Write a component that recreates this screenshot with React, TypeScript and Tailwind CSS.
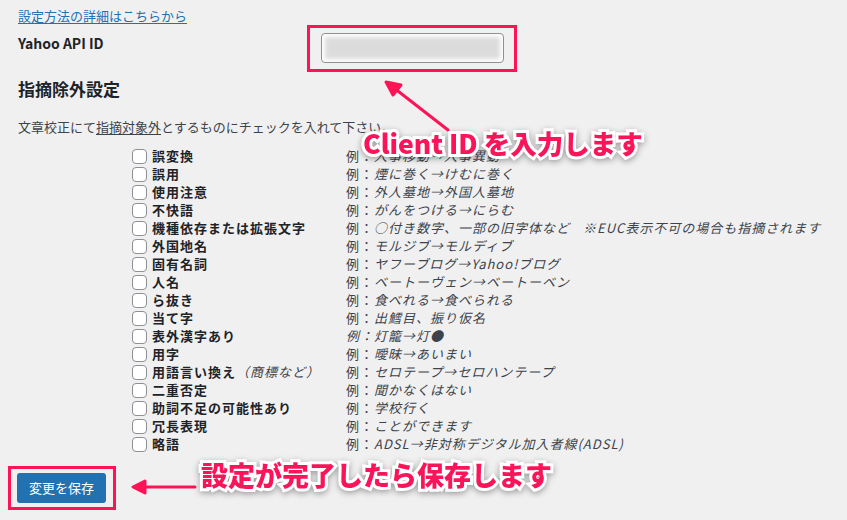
import React from 'react';

type Row = { label: string; note?: string; example: string; extra?: string; allItalic?: boolean };

const rows: Row[] = [
  { label: '誤変換', example: '人事移動→人事異動' },
  { label: '誤用', example: '煙に巻く→けむに巻く' },
  { label: '使用注意', example: '外人墓地→外国人墓地' },
  { label: '不快語', example: 'がんをつける→にらむ' },
  { label: '機種依存または拡張文字', example: '○付き数字、一部の旧字体など', extra: '※EUC表示不可の場合も指摘されます' },
  { label: '外国地名', example: 'モルジブ→モルディブ' },
  { label: '固有名詞', example: 'ヤフーブログ→Yahoo!ブログ' },
  { label: '人名', example: 'ベートーヴェン→ベートーベン' },
  { label: 'ら抜き', example: '食べれる→食べられる' },
  { label: '当て字', example: '出鱈目、振り仮名' },
  { label: '表外漢字あり', example: '灯籠→灯●', allItalic: true },
  { label: '用字', example: '曖昧→あいまい' },
  { label: '用語言い換え', note: '（商標など）', example: 'セロテープ→セロハンテープ' },
  { label: '二重否定', example: '聞かなくはない' },
  { label: '助詞不足の可能性あり', example: '学校行く' },
  { label: '冗長表現', example: 'ことができます' },
  { label: '略語', example: 'ADSL→非対称デジタル加入者線(ADSL)' },
];

export default function App() {
  return (
    <div className="relative w-[847px] h-[520px] overflow-hidden bg-[#f0f0f1] text-[13px] text-[#3c434a] font-['Noto_Sans_CJK_JP','Noto_Sans',sans-serif]">
      <div className="pl-[18px] pt-[7px]">
        <a href="#" className="block w-fit leading-[18px] text-[#2271b1] underline underline-offset-2">設定方法の詳細はこちらから</a>

        {/* API ID */}
        <div className="flex">
          <div className="w-[289px] pt-[8px] text-[14px] font-bold text-[#1d2327] leading-[20px]">Yahoo API ID</div>
          <div className="border-[3px] border-[#fe1456] pt-[5px] pb-[6px] pl-[11px] pr-[10px]">
            <div className="w-[183px] h-[30px] rounded-[4px] border border-[#8c8f94] bg-white p-[3px] overflow-hidden">
              <div className="w-full h-full bg-[#dcdcdc] blur-[2px]" />
            </div>
          </div>
        </div>

        <h2 className="mt-[5px] text-[17px] font-bold leading-[24px] text-[#1d2327]">指摘除外設定</h2>
        <p className="mt-[16px] leading-[20px]">
          文章校正にて<span className="underline underline-offset-2">指摘対象外</span>とするものにチェックを入れて下さい。
        </p>

        {/* exclusions */}
        <div className="mt-[10px] pl-[114px] flex flex-col leading-[18px] tracking-[1px]">
          {rows.map((r) => (
            <div key={r.label} className="flex items-center h-[18px]">
              <div className="w-[214px] flex items-center gap-[5px]">
                <span className="w-[15px] h-[15px] rounded-[4px] border border-[#8c8f94] bg-white shrink-0" />
                <span className="font-bold text-[#1d2327] whitespace-nowrap">
                  {r.label}
                  {r.note && <i className="font-normal text-[#3c434a]">{r.note}</i>}
                </span>
              </div>
              <div className="whitespace-nowrap">
                {r.allItalic ? (
                  <i>例：{r.example}</i>
                ) : (
                  <>
                    例：<i>{r.example}</i>
                  </>
                )}
                {r.extra && <i className="ml-[13px]">{r.extra}</i>}
              </div>
            </div>
          ))}
        </div>
      </div>

      {/* save */}
      <div className="mt-[13px] ml-[8px] w-fit border-[3px] border-[#fe1456] pt-[4px] pb-[4px] pl-[6px] pr-[7px]">
        <button className="h-[30px] px-[12px] rounded-[3px] bg-[#2271b1] text-white text-[13px] leading-[30px]">変更を保存</button>
      </div>

      {/* annotations */}
      <svg className="absolute inset-0 pointer-events-none" width="847" height="520">
        <g stroke="#fe1456" strokeWidth="3" fill="#fe1456" strokeLinecap="round">
          <line x1="448" y1="130" x2="394" y2="88" />
          <polygon points="386,82 401,85 393,95" strokeLinejoin="round" />
          <line x1="195" y1="487" x2="142" y2="487" />
          <polygon points="133,487 145,481 145,493" strokeLinejoin="round" />
        </g>
      </svg>
      <div className="absolute left-[363px] top-[125px] text-[26.5px] leading-[36px] font-black text-[#fa1459] whitespace-nowrap [-webkit-text-stroke:6px_white] [paint-order:stroke_fill] drop-shadow-[0_2px_3px_rgba(0,0,0,0.35)]">
        Client ID を入力します
      </div>
      <div className="absolute left-[201px] top-[457px] text-[27px] leading-[36px] font-black text-[#fa1459] whitespace-nowrap [-webkit-text-stroke:6px_white] [paint-order:stroke_fill] drop-shadow-[0_2px_3px_rgba(0,0,0,0.35)]">
        設定が完了したら保存します
      </div>
    </div>
  );
}
